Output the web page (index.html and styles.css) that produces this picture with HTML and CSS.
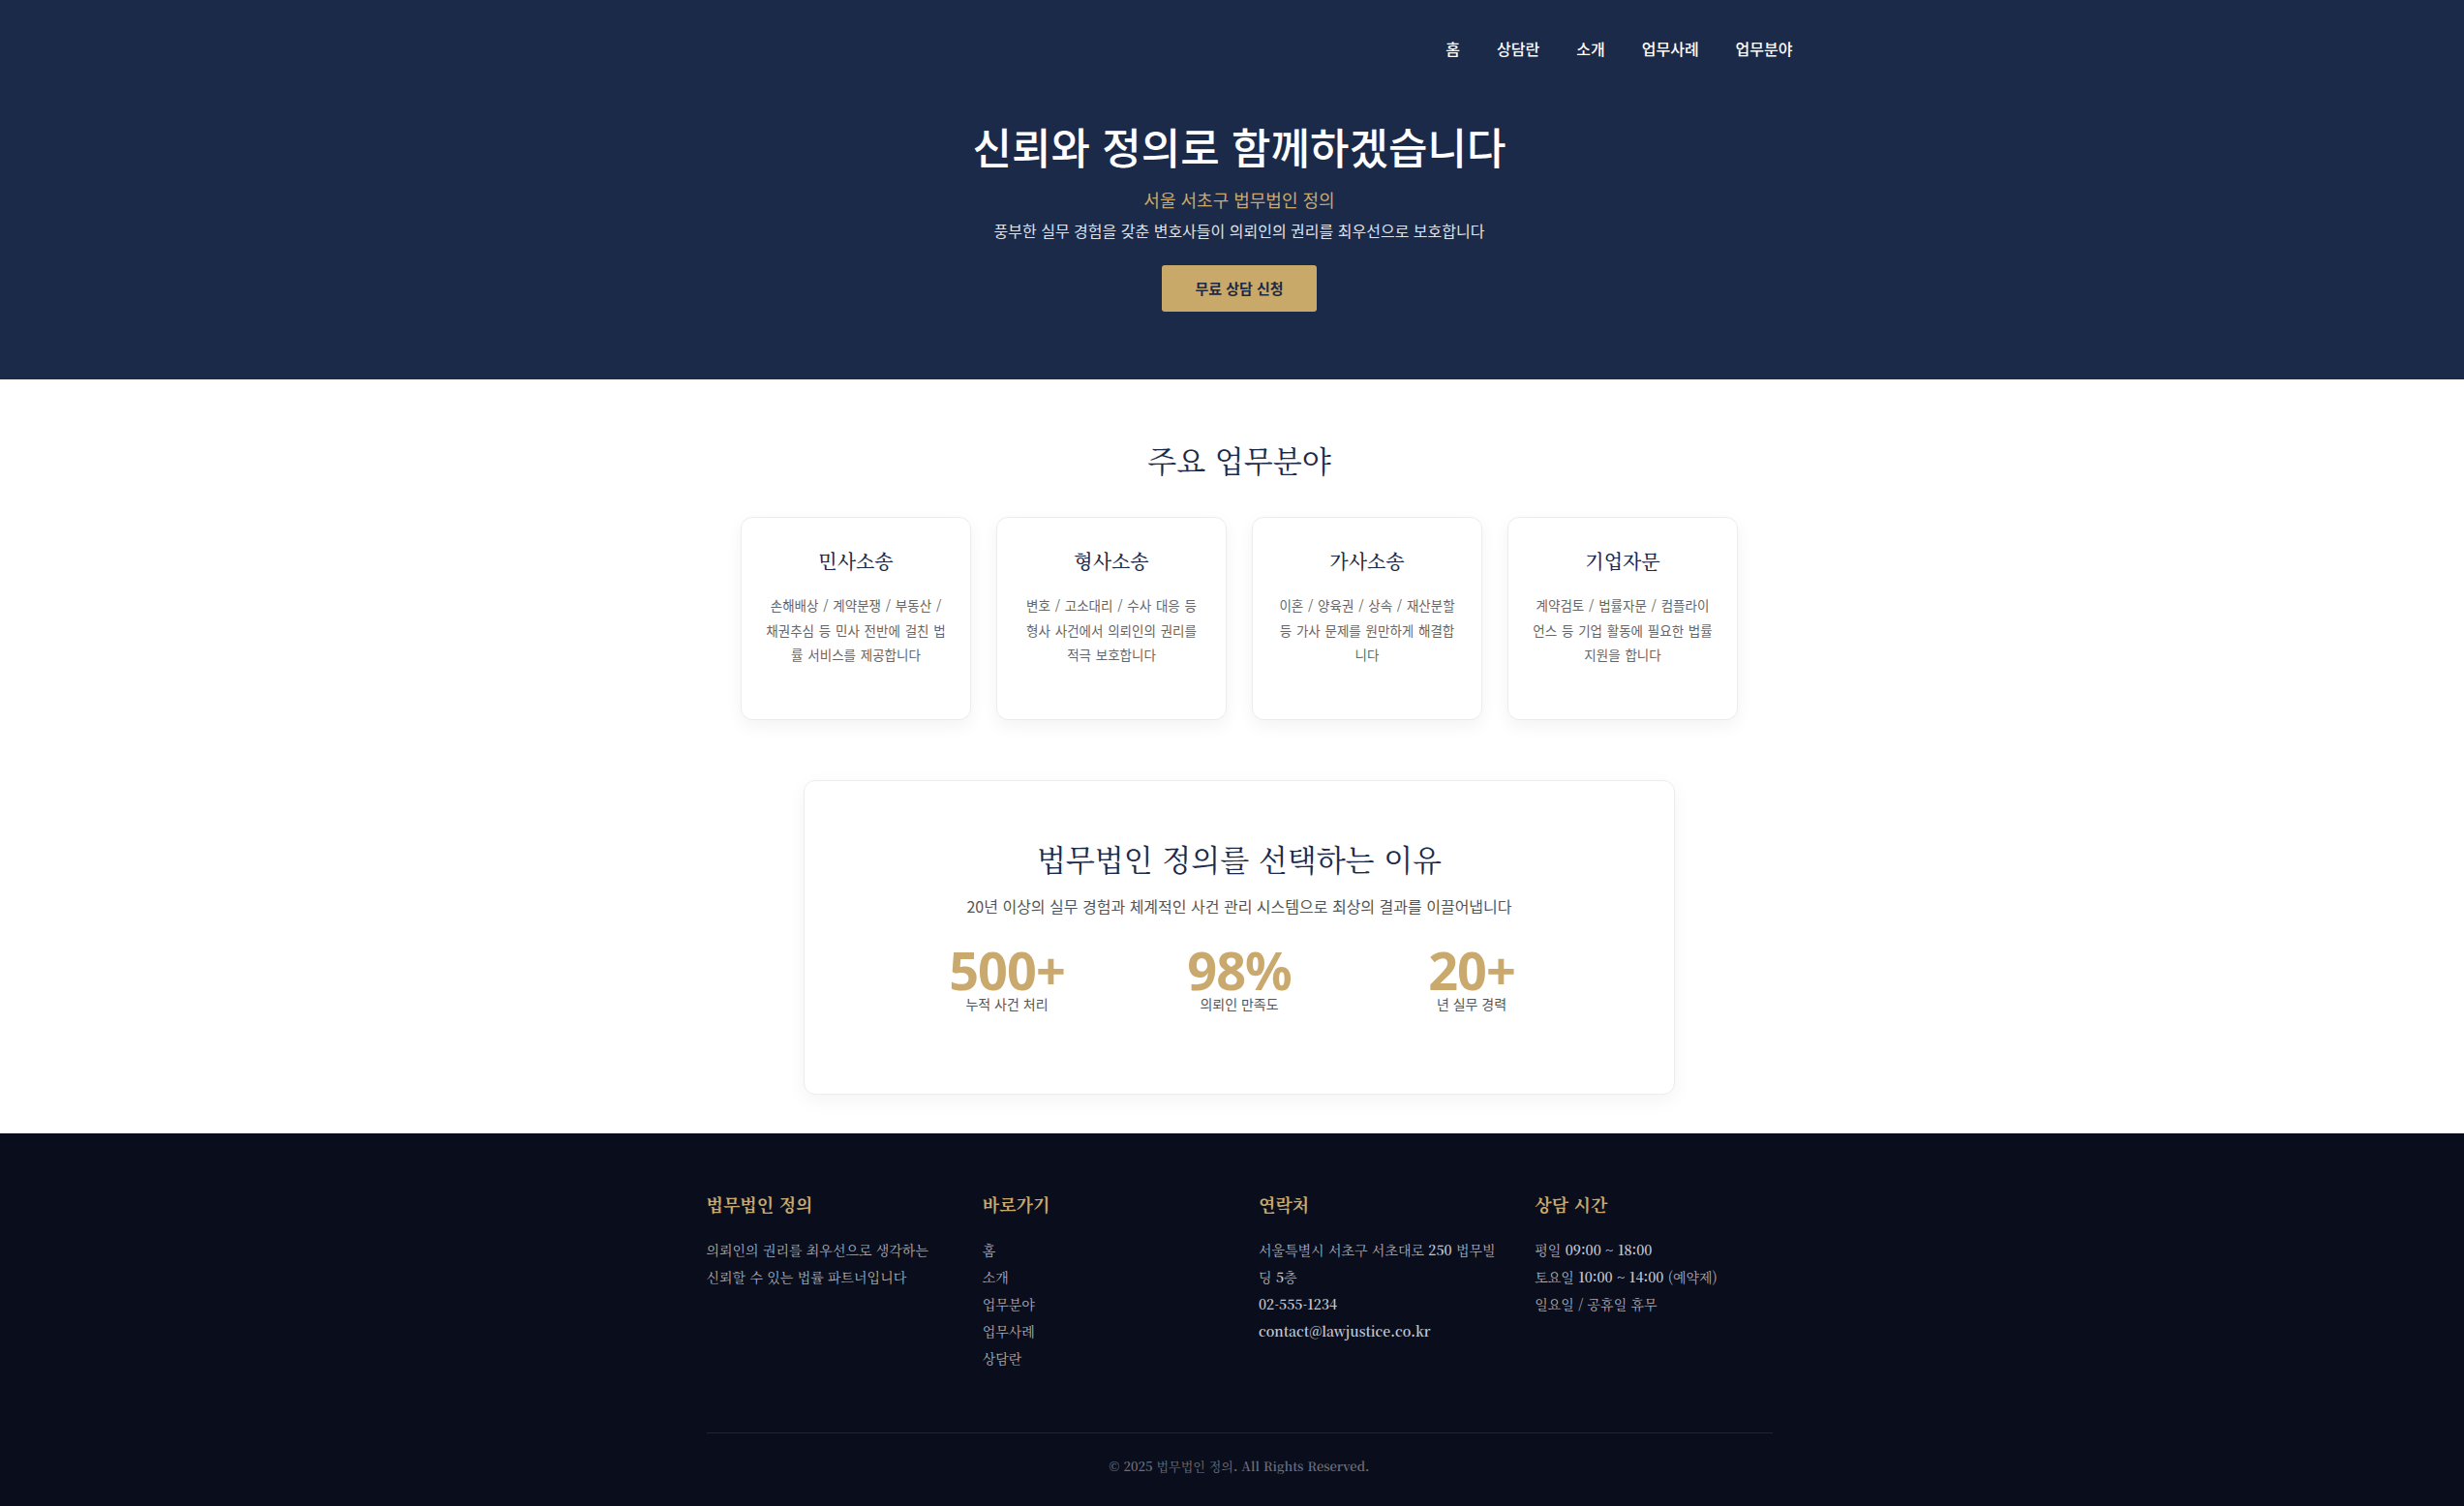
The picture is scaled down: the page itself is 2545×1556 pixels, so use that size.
FILE: index.html
```html
<!DOCTYPE html>
<html lang="ko">
<head>
<meta charset="utf-8">
<title>법무법인 정의</title>
<link rel="stylesheet" href="styles.css">
</head>
<body>
<header class="hero">
  <nav class="nav">
    <a href="#">홈</a>
    <a href="#">상담란</a>
    <a href="#">소개</a>
    <a href="#">업무사례</a>
    <a href="#">업무분야</a>
  </nav>
  <div class="hero-inner">
    <h1 class="hero-title">신뢰와 정의로 함께하겠습니다</h1>
    <p class="hero-sub">서울 서초구 법무법인 정의</p>
    <p class="hero-desc">풍부한 실무 경험을 갖춘 변호사들이 의뢰인의 권리를 최우선으로 보호합니다</p>
    <a class="hero-btn" href="#">무료 상담 신청</a>
  </div>
</header>

<main class="main">
  <h2 class="section-title">주요 업무분야</h2>
  <div class="cards">
    <div class="card">
      <h3 class="card-title">민사소송</h3>
      <p class="card-desc">손해배상 / 계약분쟁 / 부동산 /<br>채권추심 등 민사 전반에 걸친 법<br>률 서비스를 제공합니다</p>
    </div>
    <div class="card">
      <h3 class="card-title">형사소송</h3>
      <p class="card-desc">변호 / 고소대리 / 수사 대응 등<br>형사 사건에서 의뢰인의 권리를<br>적극 보호합니다</p>
    </div>
    <div class="card">
      <h3 class="card-title">가사소송</h3>
      <p class="card-desc">이혼 / 양육권 / 상속 / 재산분할<br>등 가사 문제를 원만하게 해결합<br>니다</p>
    </div>
    <div class="card">
      <h3 class="card-title">기업자문</h3>
      <p class="card-desc">계약검토 / 법률자문 / 컴플라이<br>언스 등 기업 활동에 필요한 법률<br>지원을 합니다</p>
    </div>
  </div>

  <section class="why">
    <h2 class="why-title">법무법인 정의를 선택하는 이유</h2>
    <p class="why-desc">20년 이상의 실무 경험과 체계적인 사건 관리 시스템으로 최상의 결과를 이끌어냅니다</p>
    <div class="stats">
      <div class="stat">
        <div class="stat-num">500+</div>
        <div class="stat-label">누적 사건 처리</div>
      </div>
      <div class="stat">
        <div class="stat-num">98%</div>
        <div class="stat-label">의뢰인 만족도</div>
      </div>
      <div class="stat">
        <div class="stat-num">20+</div>
        <div class="stat-label">년 실무 경력</div>
      </div>
    </div>
  </section>
</main>

<footer class="footer">
  <div class="footer-inner">
    <div class="footer-cols">
      <div class="fcol">
        <h4 class="fhead">법무법인 정의</h4>
        <p class="ftext">의뢰인의 권리를 최우선으로 생각하는 신뢰할 수 있는 법률 파트너입니다</p>
      </div>
      <div class="fcol">
        <h4 class="fhead">바로가기</h4>
        <ul class="flinks">
          <li>홈</li>
          <li>소개</li>
          <li>업무분야</li>
          <li>업무사례</li>
          <li>상담란</li>
        </ul>
      </div>
      <div class="fcol">
        <h4 class="fhead">연락처</h4>
        <p class="ftext">서울특별시 서초구 서초대로 <span class="lat">250</span> 법무빌딩 <span class="lat">5</span>층</p>
        <p class="ftext"><span class="lat">02-555-1234</span></p>
        <p class="ftext"><span class="lat">contact@lawjustice.co.kr</span></p>
      </div>
      <div class="fcol">
        <h4 class="fhead">상담 시간</h4>
        <p class="ftext">평일 <span class="lat">09:00 ~ 18:00</span></p>
        <p class="ftext">토요일 <span class="lat">10:00 ~ 14:00</span> (예약제)</p>
        <p class="ftext">일요일 / 공휴일 휴무</p>
      </div>
    </div>
    <div class="copy"><span class="lat">© 2025</span> 법무법인 정의<span class="lat">. All Rights Reserved.</span></div>
  </div>
</footer>
</body>
</html>
```

FILE: styles.css
```css
* { box-sizing: border-box; }

html, body {
  margin: 0;
  padding: 0;
}

body {
  font-family: "Noto Sans CJK KR", "Noto Sans", sans-serif;
  color: #1c2a4a;
  background: #ffffff;
}

h1, h2, h3, h4, p, ul { margin: 0; padding: 0; }

/* ---------- hero ---------- */
.hero {
  background: #1c2a4a;
  padding-bottom: 70px;
}

.nav {
  max-width: 1200px;
  margin: 0 auto;
  padding: 38px 21px 0 20px;
  display: flex;
  justify-content: flex-end;
  gap: 38px;
}

.nav a {
  color: #ffffff;
  text-decoration: none;
  font-size: 16px;
  line-height: 24px;
  font-weight: 500;
}

.hero-inner {
  padding-left: 15px;
  display: flex;
  flex-direction: column;
  align-items: center;
  text-align: center;
}

.hero-title {
  margin-top: 60px;
  font-size: 44px;
  line-height: 58px;
  font-weight: 500;
  color: #ffffff;
}

.hero-sub {
  margin-top: 13px;
  font-size: 18px;
  line-height: 27px;
  color: #c9a96e;
}

.hero-desc {
  margin-top: 6px;
  font-size: 16px;
  line-height: 25px;
  color: #dfe3ea;
}

.hero-btn {
  margin-top: 23px;
  display: inline-block;
  background: #c9a96a;
  color: #1c2a4a;
  text-decoration: none;
  font-size: 15px;
  line-height: 20px;
  font-weight: 700;
  padding: 14px 34px;
  border-radius: 3px;
}

/* ---------- main ---------- */
.main {
  padding: 63px 0 40px 15px;
  display: flex;
  flex-direction: column;
  align-items: center;
}

.section-title,
.why-title,
.card-title {
  font-family: "Noto Serif CJK KR", "Noto Serif KR", "Liberation Serif", "Noto Sans CJK KR", serif;
  font-weight: 400;
  color: #1c2a4a;
}

.section-title {
  font-size: 31px;
  line-height: 40px;
}

.cards {
  margin-top: 39px;
  display: grid;
  grid-template-columns: repeat(4, 238px);
  gap: 26px;
}

.card {
  background: #ffffff;
  border: 1px solid #ececec;
  border-radius: 12px;
  box-shadow: 0 6px 18px rgba(0, 0, 0, 0.05);
  padding: 31px 12px 53px;
  text-align: center;
}

.card-title {
  font-size: 20px;
  line-height: 28px;
  font-weight: 500;
}

.card-desc {
  margin-top: 19px;
  font-size: 13.5px;
  line-height: 25.5px;
  color: #666666;
  white-space: nowrap;
  word-spacing: 1px;
}

/* ---------- why ---------- */
.why {
  margin-top: 62px;
  width: 900px;
  background: #ffffff;
  border: 1px solid #ececec;
  border-radius: 12px;
  box-shadow: 0 6px 20px rgba(0, 0, 0, 0.05);
  padding: 60px 0 84px;
  display: flex;
  flex-direction: column;
  align-items: center;
  text-align: center;
}

.why-title {
  font-size: 31px;
  line-height: 40px;
}

.why-desc {
  margin-top: 17px;
  font-size: 16px;
  line-height: 24px;
  color: #555555;
}

.stats {
  margin-top: 27px;
  display: flex;
  justify-content: center;
}

.stat {
  width: 240px;
  display: flex;
  flex-direction: column;
  align-items: center;
}

.stat-num {
  font-family: "Noto Sans", "Inter", sans-serif;
  font-size: 54px;
  line-height: 54px;
  font-weight: 700;
  color: #c9a96e;
  letter-spacing: -1px;
}

.stat-label {
  font-size: 14px;
  line-height: 17px;
  color: #555555;
}

/* ---------- footer ---------- */
.footer {
  background: #0a0e1c;
  padding: 60px 0 33px 15px;
  font-family: "Noto Serif CJK KR", "Noto Serif KR", "Liberation Serif", "Noto Sans CJK KR", serif;
}

.footer-inner {
  width: 1101px;
  margin: 0 auto;
}

.footer-cols {
  display: grid;
  grid-template-columns: repeat(4, 1fr);
  gap: 40px;
}

.fhead {
  font-size: 18px;
  line-height: 26px;
  font-weight: 700;
  color: #c9a96e;
  margin-bottom: 20px;
}

.ftext,
.flinks li {
  font-size: 14px;
  line-height: 28px;
  color: #a9adb8;
}

.flinks {
  list-style: none;
}

.lat {
  font-family: "Noto Serif CJK KR", "Noto Serif", serif;
  font-weight: 600;
  line-height: 1;
  color: #c3c7d1;
}

.copy {
  margin-top: 63px;
  border-top: 1px solid #1f2535;
  padding-top: 24px;
  text-align: center;
  font-size: 13px;
  line-height: 20px;
  color: #6b6f7c;
}

.copy .lat {
  color: #6b6f7c;
}
```
